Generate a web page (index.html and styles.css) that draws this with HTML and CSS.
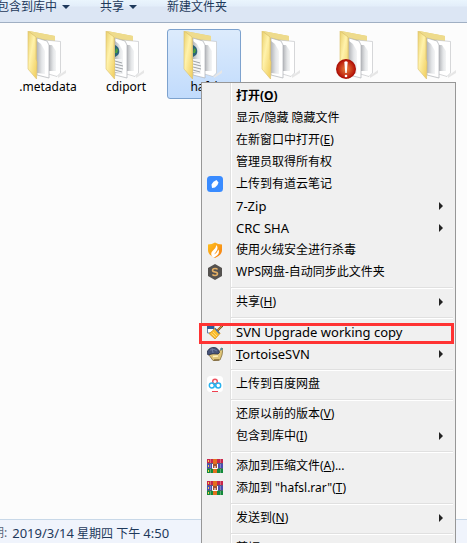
FILE: index.html
```html
<!DOCTYPE html>
<html lang="zh-CN">
<head>
    <meta charset="UTF-8">
    <meta name="viewport" content="width=device-width, initial-scale=1.0">
    <title>文件夹</title>
    <link rel="stylesheet" href="styles.css">
</head>
<body>
    <!-- Shared drawings -->
    <svg class="defs" aria-hidden="true">
        <defs>
            <linearGradient id="flap" x1="0" y1="0" x2="1" y2="1">
                <stop offset="0" stop-color="#e9cf6c"/>
                <stop offset=".4" stop-color="#fff2ab"/>
                <stop offset="1" stop-color="#efcb58"/>
            </linearGradient>
            <linearGradient id="sheet" x1="0" y1="0" x2="1" y2="0">
                <stop offset="0" stop-color="#b4b6ba"/>
                <stop offset=".6" stop-color="#e4e6e8"/>
                <stop offset="1" stop-color="#f4f5f6"/>
            </linearGradient>
            <radialGradient id="alert">
                <stop offset="0" stop-color="#e8843f"/>
                <stop offset="1" stop-color="#b81408"/>
            </radialGradient>
            <linearGradient id="fire" x1="0" y1="0" x2="1" y2="1">
                <stop offset="0" stop-color="#ffc21c"/>
                <stop offset="1" stop-color="#f57a14"/>
            </linearGradient>
        </defs>
        <symbol id="folder" viewBox="0 0 48 48">
            <path d="M34 45 42 39 42 42 34 47Z" fill="#e6e6e6"/>
            <path d="M5 0 31 5V38L13 42Z" fill="#e3cd78"/>
            <path d="M5 0 31 5V10L13 7Z" fill="#eedb8c"/>
            <path d="M21 9 36.500 10.500V42L33 45.500 21 42Z" fill="#fff" stroke="#c4c6c8" stroke-width=".7"/>
            <path d="M25 14 28 14 32 20V40L25 40Z" fill="url(#sheet)"/>
            <path d="M13 7 23 10 25 14V47L13 44Z" fill="#fff" stroke="#aeb0b4" stroke-width=".7"/>
            <path d="M13 10 17 13 21 20V43L13 42Z" fill="url(#sheet)"/>
            <path d="M4 0 12 6V28L13 31 12.500 48 4 38Z" fill="url(#flap)" stroke="#dcc06a" stroke-width=".6"/>
        </symbol>
        <symbol id="folder-web" viewBox="0 0 48 48">
            <use href="#folder"/>
            <path d="M13 14C18 16 18 22 16 24L13 26Z" fill="#2a6478"/>
            <path d="M14 17 16 19 15 22 13 22Z" fill="#50a43a"/>
            <path d="M13 28H20V42L13 41Z" fill="#f4f5f6"/>
            <path d="M13 30 20 32M13 33 21 35M13 36 21 38M13 39 20 41" stroke="#a0a4a8" stroke-width="1"/>
        </symbol>
        <symbol id="winrar" viewBox="0 0 16 16">
            <path d="M0 1H16V5H0Z" fill="#c8264a"/>
            <path d="M0 5.500H16V10H0Z" fill="#4b4bb2"/>
            <path d="M0 10.500H16V15H0Z" fill="#128a3a"/>
            <path d="M0 5H16V6H0ZM0 10H16V11H0Z" fill="#28324c" fill-opacity=".6"/>
            <path d="M1.500 2V4M1.500 7V9M1.500 12V14" stroke="#f3d24b"/>
            <path d="M3.500 1V5M3.500 6V10M3.500 11V15M13.500 1V5M13.500 6V10M13.500 11V15" stroke="#fff" stroke-opacity=".3"/>
            <path d="M6 1H10V15H6Z" fill="#e2701e"/>
            <path d="M6 6H10V11H6Z" fill="#a5522d"/>
            <path d="M5.500 6V10.500H10.500V6M8 8V10" fill="none" stroke="#fff"/>
        </symbol>
    </svg>

    <div class="window">
        <header class="toolbar">
            <button class="tool">包含到库中<span class="caret"></span></button>
            <button class="tool">共享<span class="caret"></span></button>
            <button class="tool">新建文件夹</button>
        </header>

        <main class="files">
            <button class="file">
                <svg class="folder"><use href="#folder"/></svg>
                <span>.metadata</span>
            </button>
            <button class="file">
                <svg class="folder"><use href="#folder-web"/></svg>
                <span>cdiport</span>
            </button>
            <button class="file selected">
                <svg class="folder"><use href="#folder-web"/></svg>
                <span>hafsl</span>
            </button>
            <button class="file" aria-label="文件夹">
                <svg class="folder"><use href="#folder"/></svg>
            </button>
            <button class="file" aria-label="文件夹">
                <svg class="folder" viewBox="0 0 48 48">
                    <use href="#folder"/>
                    <circle cx="10" cy="38" r="10" fill="#a81208"/>
                    <circle cx="10" cy="38" r="9" fill="url(#alert)"/>
                    <path d="M8.300 31Q10 29.500 11.700 31L10.700 42H9.300Z" fill="#fff"/>
                    <circle cx="10" cy="45" r="1.300" fill="#fff"/>
                </svg>
            </button>
            <button class="file" aria-label="文件夹">
                <svg class="folder"><use href="#folder"/></svg>
            </button>
        </main>

        <footer class="status">
            <span class="status-label">期:</span>
            <span><span class="latin">2019/3/14</span> 星期四 下午 <span class="latin">4:50</span></span>
        </footer>

        <ul class="menu">
            <li><button class="item default"><span class="icon"></span>打开(<u>O</u>)</button></li>
            <li><button class="item"><span class="icon"></span>显示/隐藏 隐藏文件</button></li>
            <li><button class="item"><span class="icon"></span>在新窗口中打开(<u>E</u>)</button></li>
            <li><button class="item"><span class="icon"></span>管理员取得所有权</button></li>
            <li><button class="item">
                <svg class="icon" viewBox="0 0 16 16">
                    <rect width="16" height="16" rx="3.500" fill="#398bff"/>
                    <path d="M5 12 4.500 8.500Q6 5 9.500 4L11.500 6.500Q11 9.500 8 11.500Z" fill="#fff"/>
                </svg>上传到有道云笔记</button></li>
            <li><button class="item latin more"><span class="icon"></span>7-Zip</button></li>
            <li><button class="item latin more"><span class="icon"></span>CRC SHA</button></li>
            <li><button class="item">
                <svg class="icon" viewBox="0 0 16 16">
                    <path d="M1 2.500Q5 2.500 8 .5 11 2.500 15 2.500V8Q15 13 8 16 1 13 1 8Z" fill="url(#fire)"/>
                    <path d="M5 14.500Q3 11 6 8.500 9 6 9.500 3 11.500 6 9.500 9 8 11 7 12.500 10 11 11.500 7.500 13 11 10 13.500 8 15 7 15.500Z" fill="#fff"/>
                </svg>使用火绒安全进行杀毒</button></li>
            <li><button class="item">
                <svg class="icon" viewBox="0 0 16 16">
                    <path d="M8 0 15 4V12L8 16 1 12V4Z" fill="#555250"/>
                    <path d="M10.500 5.500Q10 4.500 8 4.500 5.500 4.500 5.500 6.300 5.500 7.700 8 8 10.500 8.300 10.500 9.800 10.500 11.500 8 11.500 6 11.500 5.500 10.400" fill="none" stroke="#e5b065" stroke-width="1.500"/>
                </svg>WPS网盘-自动同步此文件夹</button></li>
            <li class="separator"></li>
            <li><button class="item more"><span class="icon"></span>共享(<u>H</u>)</button></li>
            <li class="separator"></li>
            <li class="marked"><button class="item latin">
                <svg class="icon" viewBox="0 0 16 16">
                    <path d="M.5 1.500H7V9H.5Z" fill="#fff" stroke="#5f7ca6"/>
                    <path d="M0 2H7V5H0Z" fill="#2f5c98"/>
                    <path d="M15.500 1.500 10 7" stroke="#7a4a1e" stroke-width="2.200"/>
                    <path d="M15.300 1.500 10.500 6.300" stroke="#e0a040" stroke-width="1"/>
                    <path d="M8 4 13 9.500 8 15 2 9.500Q5 8 8 4Z" fill="#fbbb2c" stroke="#d69420" stroke-width=".8"/>
                    <path d="M4.500 9.500 8.500 13.500M6 8 10 12" stroke="#ffe48a" stroke-width=".8"/>
                    <path d="M8 4.500 12.500 9.500" stroke="#3c6caa" stroke-width="1.300"/>
                </svg>SVN Upgrade working copy</button></li>
            <li><button class="item latin more">
                <svg class="icon" viewBox="0 0 16 16">
                    <path d="M4 7 13 5Q14 1 16 2.500L15 9 13 14 6 14.500 2 9Z" fill="#dfc578" stroke="#75602c" stroke-width=".7"/>
                    <path d="M0 7Q1 2 6 1.500 11 1 12.500 6.500L11 8Q6 7 1 9Z" fill="#465378" stroke="#222b48" stroke-width=".8"/>
                    <path d="M3 4 7 3.500 10 5M5 2 6 7" fill="none" stroke="#7585ab" stroke-width=".8"/>
                    <path d="M6 10.500 11 10" stroke="#fff1bb" stroke-width="1.500"/>
                    <path d="M14 2 15 4" stroke="#4b8cac" stroke-width="1.800"/>
                    <path d="M7 14 12 14" stroke="#6b4e22"/>
                </svg><span><u>T</u>ortoiseSVN</span></button></li>
            <li class="separator"></li>
            <li><button class="item">
                <svg class="icon" viewBox="0 0 16 16">
                    <rect width="16" height="16" rx="3.500" fill="#fff"/>
                    <circle cx="8" cy="5.500" r="2.300" fill="none" stroke="#ef5261" stroke-width="1.400"/>
                    <circle cx="4.800" cy="9.500" r="2.500" fill="none" stroke="#28b2ee" stroke-width="1.400"/>
                    <circle cx="11.200" cy="9.500" r="2.500" fill="none" stroke="#28b2ee" stroke-width="1.400"/>
                    <path d="M6.500 7.500 9.500 11" stroke="#28b2ee" stroke-width="1.400"/>
                    <rect x="5" y="15" width="6" height="1" fill="#ef4050"/>
                </svg>上传到百度网盘</button></li>
            <li class="separator"></li>
            <li><button class="item"><span class="icon"></span>还原以前的版本(<u>V</u>)</button></li>
            <li><button class="item more"><span class="icon"></span>包含到库中(<u>I</u>)</button></li>
            <li class="separator"></li>
            <li><button class="item"><svg class="icon"><use href="#winrar"/></svg>添加到压缩文件(<u>A</u>)...</button></li>
            <li><button class="item"><svg class="icon"><use href="#winrar"/></svg><span>添加到 "hafsl.rar"(<u>T</u>)</span></button></li>
            <li class="separator"></li>
            <li><button class="item more"><span class="icon"></span>发送到(<u>N</u>)</button></li>
            <li class="separator"></li>
            <li><button class="item"><span class="icon"></span>剪切(<u>T</u>)</button></li>
        </ul>
    </div>
</body>
</html>
```

FILE: styles.css
```css
* {
    box-sizing: border-box;
}
body {
    margin: 0;
    font-family: "Noto Sans", "Noto Sans CJK SC", sans-serif;
    font-size: 12px;
    line-height: 16px;
    color: #000;
}
button {
    margin: 0;
    padding: 0;
    border: 0;
    background: none;
    font: inherit;
    color: inherit;
    white-space: nowrap;
}
.defs {
    position: absolute;
    width: 0;
    height: 0;
}
.window {
    position: relative;
    display: flex;
    flex-direction: column;
    height: 100vh;
    overflow: hidden;
    background: #fcfcfc;
}

/* Toolbar */
.toolbar {
    display: flex;
    gap: 30px;
    height: 23px;
    margin-left: -3px;
    padding-bottom: 8px;
    align-items: center;
    background: linear-gradient(#eaf5fd, #e3eefa 6px, #dce6f4 7px);
    border-bottom: 1px solid #a0afc3;
    color: #1e395b;
    line-height: 14px;
}
.tool {
    display: flex;
    align-items: center;
    gap: 5px;
}
.caret {
    border: 4px solid transparent;
    border-top-color: #1e395b;
    border-bottom: 0;
}

/* Folder list */
.files {
    display: flex;
    flex: 1;
    align-items: flex-start;
    gap: 4px;
    padding: 6px 0 0 11px;
    overflow: hidden;
}
.file {
    display: flex;
    flex: none;
    flex-direction: column;
    align-items: center;
    width: 74px;
    height: 70px;
    padding-top: 1px;
    border: 1px solid transparent;
    border-radius: 3px;
}
.file.selected {
    background: linear-gradient(#dcebfc, #c1dbfc);
    border-color: #7da2ce;
}
.folder {
    width: 48px;
    height: 48px;
}

/* Status bar */
.status {
    display: flex;
    gap: 5px;
    height: 24px;
    margin-left: -8px;
    padding-top: 5px;
    background: #f0f4fc;
    border-top: 1px solid #c8d8e8;
    color: #1e395b;
    white-space: nowrap;
}
.status-label {
    color: #5a6779;
}
.latin {
    font-size: 13px;
}

/* Context menu */
.menu {
    position: absolute;
    top: 82px;
    left: 201px;
    width: 255px;
    margin: 0;
    padding: 2px;
    list-style: none;
    border: 1px solid #979797;
    background: linear-gradient(90deg, transparent 26px, #e0e0e0 26px 27px, #fff 27px 28px, transparent 28px) #f0f0f0;
    background-origin: content-box;
}
.item {
    display: flex;
    align-items: center;
    width: 100%;
    height: 22px;
    padding: 0 10px 0 3px;
}
.item.latin {
    padding-bottom: 1px;
}
.item.default {
    font-weight: bold;
}
.icon {
    flex: none;
    width: 16px;
    height: 16px;
    margin-right: 13px;
}
.more::after {
    content: "";
    margin-left: auto;
    border: 4px solid transparent;
    border-left-color: #222;
    border-right: 0;
}
.separator {
    height: 8px;
    margin-left: 27px;
    background: linear-gradient(transparent 4px, #e0e0e0 4px 5px, #fff 5px 6px, transparent 6px);
}
.marked {
    position: relative;
}
.marked::after {
    content: "";
    position: absolute;
    inset: 2px -1px -1px -5px;
    border: 3px solid #ff3333;
}
```
